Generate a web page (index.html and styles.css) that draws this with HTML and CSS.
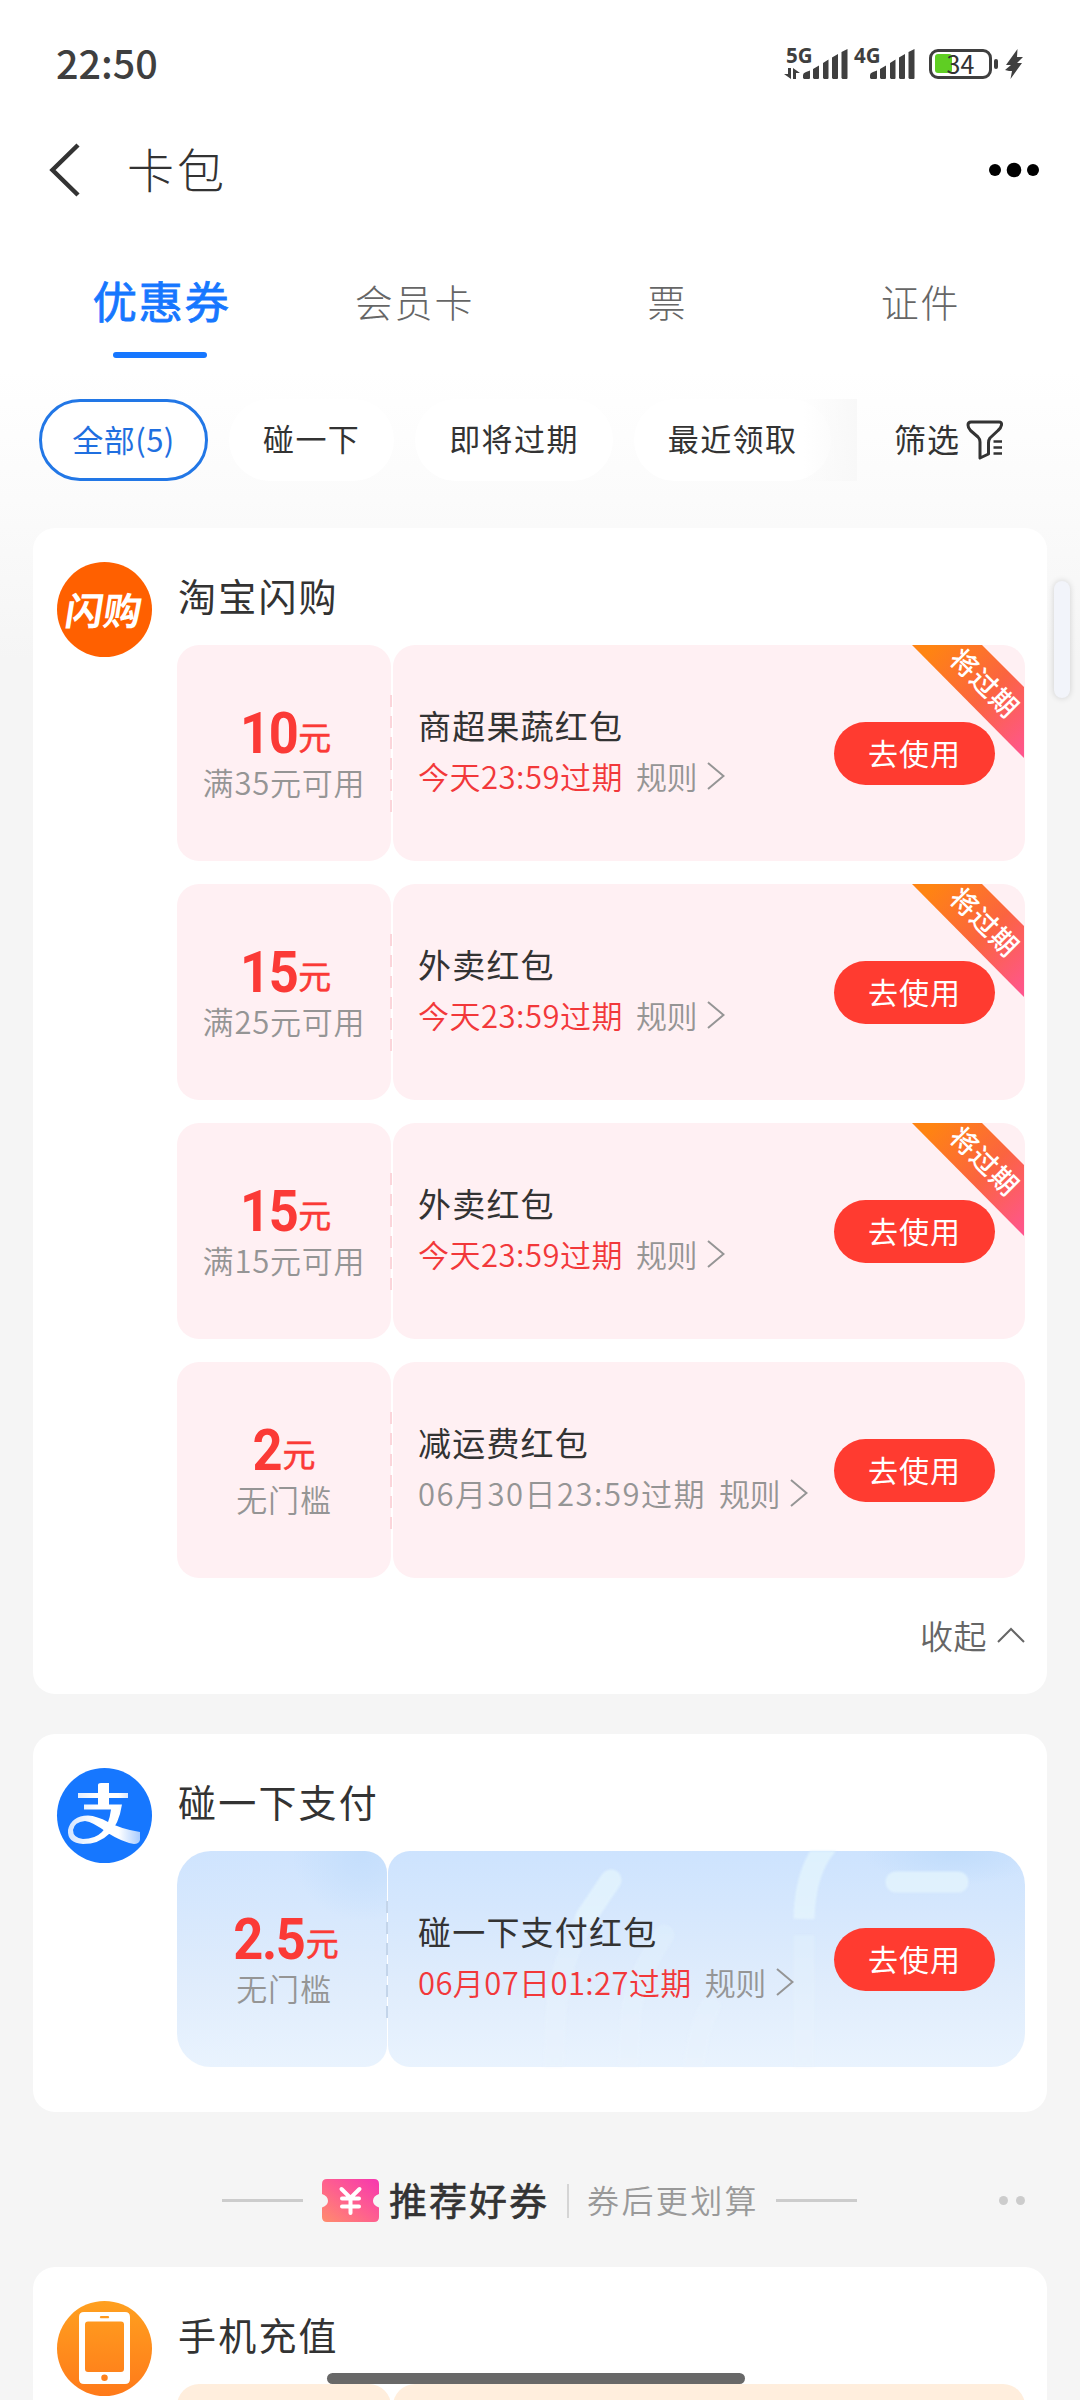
FILE: index.html
```html
<!DOCTYPE html>
<html lang="zh-CN">
<head>
<meta charset="utf-8">
<title>卡包</title>
<link rel="stylesheet" href="styles.css">
</head>
<body>
<svg class="defs" width="0" height="0" aria-hidden="true">
  <defs>
    <linearGradient id="ribbonFill" x1="0" y1="0" x2="1" y2="1">
      <stop offset="0.1" stop-color="#ff8412"/><stop offset="0.55" stop-color="#fb6440"/><stop offset="1" stop-color="#ff5591"/>
    </linearGradient>
    <linearGradient id="ticketFill" x1="0" y1="1" x2="1" y2="0">
      <stop offset="0" stop-color="#ff8d6c"/><stop offset="0.5" stop-color="#fe5f8f"/><stop offset="1" stop-color="#f636b0"/>
    </linearGradient>
    <linearGradient id="payFill" x1="0" y1="0" x2="1" y2="0">
      <stop offset="0" stop-color="#d3e4ff"/><stop offset="0.4" stop-color="#fff"/><stop offset="0.7" stop-color="#fff"/><stop offset="1" stop-color="#a9ccff"/>
    </linearGradient>
    <linearGradient id="decorFill" gradientUnits="userSpaceOnUse" x1="0" y1="0" x2="0" y2="216">
      <stop offset="0" stop-color="#def1fd"/><stop offset="1" stop-color="#ebf4fe"/>
    </linearGradient>
    <symbol id="arrow" viewBox="0 0 18 28"><path d="M1 1 L16.500 14 L1 27" fill="none" stroke="currentColor" stroke-width="2"/></symbol>
    <symbol id="bars" viewBox="0 0 45 30">
      <path d="M0 29V26Q0 24 3 23L7 21.500V29Q7 30 6 30H1ZM10 29V20L16 16.500V29Q16 30 15 30H11ZM20 29V14L25.500 10.500V29Q25.500 30 24.500 30H21ZM29 29V8.500L35 5V29Q35 30 34 30H30ZM38.500 29V3L44.500 0V29Q44.500 30 43.500 30H39.500Z" fill="#3f3f3f"/>
    </symbol>
  </defs>
</svg>

<div class="screen">
  <header class="status">
    <span class="clock">22:50</span>
    <div class="status-icons">
      <div class="net">
        <div class="net-type"><span class="gen">5G</span>
          <svg width="16" height="11" viewBox="0 0 16 11"><path d="M4 0H7V11L0 6H4ZM9 11V0L16 5H12V11Z" fill="#3f3f3f"/></svg>
        </div>
        <svg class="bars bars-a" width="45" height="30"><use href="#bars"/></svg>
      </div>
      <div class="net net-b">
        <div class="net-type"><span class="gen">4G</span></div>
        <svg class="bars bars-b" width="45" height="30"><use href="#bars"/></svg>
      </div>
      <div class="battery"><i class="charge"></i><span class="level">34</span></div>
      <i class="nub"></i>
      <svg class="bolt" width="18" height="30" viewBox="0 0 18 30"><path d="M12.500 0L1 16H6L0 21L4 22H7L5.500 30L17 14H12L18 8H12Z" fill="#3f3f3f"/></svg>
    </div>
  </header>

  <nav class="navbar">
    <svg class="back" width="32" height="54" viewBox="0 0 32 54"><path d="M30 2L4.500 27L30 52" fill="none" stroke="#333" stroke-width="4.500"/></svg>
    <h1 class="nav-title">卡包</h1>
    <svg class="more" width="52" height="16" viewBox="0 0 52 16"><circle cx="7" cy="8" r="6"/><circle cx="26" cy="8" r="7.300"/><circle cx="45" cy="8" r="6"/></svg>
  </nav>

  <div class="tabs">
    <div class="tab tab-on">优惠券</div>
    <div class="tab">会员卡</div>
    <div class="tab">票</div>
    <div class="tab">证件</div>
  </div>

  <div class="filters">
    <div class="chips">
      <div class="chip chip-on">全部(5)</div>
      <div class="chip">碰一下</div>
      <div class="chip">即将过期</div>
      <div class="chip">最近领取</div>
      <div class="chips-fade"></div>
    </div>
    <div class="sift"><span>筛选</span>
      <svg width="38" height="40" viewBox="0 0 38 40" fill="none" stroke="#333" stroke-width="3" stroke-linejoin="round"><path d="M5 2H33Q36 2 35.500 5Q35 8 32 10.500L24 18Q22.500 20 22.500 23V34L14 38V22Q14 19 12 17L4.500 10.500Q2 8 2 5Q2 2 5 2Z"/><path d="M27.500 21.500H36M27.500 27.500H36M27.500 33.500H36" stroke-width="2.600"/></svg>
    </div>
  </div>

  <main class="list">
    <section class="card card-shop">
      <div class="logo logo-shop"><span>闪购</span></div>
      <div class="card-body">
        <h2 class="brand">淘宝闪购</h2>
        <div class="coupons">
          <article class="coupon">
            <div class="worth"><p class="price"><b>10</b><span>元</span></p><p class="cond">满35元可用</p></div>
            <div class="info">
              <div class="text"><h3 class="name">商超果蔬红包</h3><p class="meta"><span class="due soon">今天23:59过期</span><span class="rule">规则</span><svg class="arrow" width="18" height="28"><use href="#arrow"/></svg></p></div>
              <button class="use">去使用</button>
            </div>
            <svg class="ribbon" width="112" height="113" viewBox="0 0 112 113"><path d="M0 0H70L112 42V113Z" fill="url(#ribbonFill)"/><text class="ribbon-text" transform="translate(72 39) rotate(45)" text-anchor="middle" y="9">将过期</text></svg>
          </article>
          <article class="coupon">
            <div class="worth"><p class="price"><b>15</b><span>元</span></p><p class="cond">满25元可用</p></div>
            <div class="info">
              <div class="text"><h3 class="name">外卖红包</h3><p class="meta"><span class="due soon">今天23:59过期</span><span class="rule">规则</span><svg class="arrow" width="18" height="28"><use href="#arrow"/></svg></p></div>
              <button class="use">去使用</button>
            </div>
            <svg class="ribbon" width="112" height="113" viewBox="0 0 112 113"><path d="M0 0H70L112 42V113Z" fill="url(#ribbonFill)"/><text class="ribbon-text" transform="translate(72 39) rotate(45)" text-anchor="middle" y="9">将过期</text></svg>
          </article>
          <article class="coupon">
            <div class="worth"><p class="price"><b>15</b><span>元</span></p><p class="cond">满15元可用</p></div>
            <div class="info">
              <div class="text"><h3 class="name">外卖红包</h3><p class="meta"><span class="due soon">今天23:59过期</span><span class="rule">规则</span><svg class="arrow" width="18" height="28"><use href="#arrow"/></svg></p></div>
              <button class="use">去使用</button>
            </div>
            <svg class="ribbon" width="112" height="113" viewBox="0 0 112 113"><path d="M0 0H70L112 42V113Z" fill="url(#ribbonFill)"/><text class="ribbon-text" transform="translate(72 39) rotate(45)" text-anchor="middle" y="9">将过期</text></svg>
          </article>
          <article class="coupon">
            <div class="worth"><p class="price"><b>2</b><span>元</span></p><p class="cond">无门槛</p></div>
            <div class="info">
              <div class="text"><h3 class="name">减运费红包</h3><p class="meta"><span class="due due-long">06月30日23:59过期</span><span class="rule">规则</span><svg class="arrow" width="18" height="28"><use href="#arrow"/></svg></p></div>
              <button class="use">去使用</button>
            </div>
          </article>
        </div>
        <div class="fold"><span>收起</span><svg width="28" height="16" viewBox="0 0 28 16"><path d="M1 15L14 2L27 15" fill="none" stroke="#666" stroke-width="2"/></svg></div>
      </div>
    </section>

    <section class="card card-pay">
      <div class="logo logo-pay">
        <svg width="95" height="95" viewBox="0 0 95 95"><path d="M41 17Q41 15 44 15H52V25H71V30H52V36.500H65Q62 56 52 66Q42 76 26 76Q10 75 11 62Q14 48 31 47.500Q40 48 51 54Q64 61 83 64V72Q82 76 77 76Q65 74 50 64.500Q36 54 28 53Q17 54 16 62Q16 70 26 71Q38 71 45 64Q52 57 54 41.500H27V36.500H41V30H21V25H41Z" fill="url(#payFill)"/></svg>
      </div>
      <div class="card-body">
        <h2 class="brand">碰一下支付</h2>
        <article class="coupon coupon-blue">
          <div class="worth"><p class="price"><b>2.5</b><span>元</span></p><p class="cond">无门槛</p></div>
          <div class="info">
            <svg class="decor" width="637" height="216" viewBox="0 0 637 216" fill="none" stroke="url(#decorFill)" stroke-width="21" stroke-linecap="round"><path d="M223 29L198 66"/><path d="M198 66Q172 110 168 160L165 240" opacity=".45"/><path d="M276 84Q248 126 243 160L239 240" opacity=".4"/><path d="M322 156Q308 180 303 240" opacity=".4"/><path d="M441 -8Q417 18 416 68" stroke-linecap="butt"/><path d="M416 84V240" opacity=".45" stroke-linecap="butt"/><path d="M508 31H570"/></svg>
            <div class="text"><h3 class="name">碰一下支付红包</h3><p class="meta"><span class="due soon due-mid">06月07日01:27过期</span><span class="rule">规则</span><svg class="arrow" width="18" height="28"><use href="#arrow"/></svg></p></div>
            <button class="use">去使用</button>
          </div>
        </article>
      </div>
    </section>

    <div class="picks">
      <i class="rule-line"></i>
      <svg class="ticket" width="57" height="43" viewBox="0 0 57 43"><path d="M5 0H52Q57 0 57 5V15Q51 17 51 22Q51 26 57 28.500V38Q57 43 52 43H5Q0 43 0 38V28.500Q6 26 6 22Q6 17 0 15V5Q0 0 5 0Z" fill="url(#ticketFill)"/><path d="M19.500 10L28.500 19L37.500 10M28.500 19V34M20 19.500H37M20 27.500H37" fill="none" stroke="#fff" stroke-width="4" stroke-linecap="round"/></svg>
      <h2 class="picks-title">推荐好券</h2>
      <i class="bar"></i>
      <span class="picks-sub">券后更划算</span>
      <i class="rule-line"></i>
      <div class="dots"><i></i><i></i></div>
    </div>

    <section class="card card-phone">
      <div class="logo logo-phone">
        <svg width="95" height="95" viewBox="0 0 95 95"><path fill-rule="evenodd" d="M27 11H68Q73 11 73 16V78Q73 83 68 83H27Q22 83 22 78V16Q22 11 27 11ZM31 20.500Q28 20.500 28 23.500V68Q28 71 31 71H64Q67 71 67 68V23.500Q67 20.500 64 20.500ZM43.500 15Q42 16.300 43.500 17.300H51.500Q53 16.300 51.500 15ZM47.500 73.500A3.200 3.200 0 1 0 47.500 80A3.200 3.200 0 1 0 47.500 73.500Z" fill="#fff"/></svg>
      </div>
      <div class="card-body">
        <h2 class="brand">手机充值</h2>
        <div class="coupon coupon-peach"><div class="worth"></div><div class="info"></div></div>
      </div>
    </section>
  </main>

  <i class="side-handle"></i>
  <i class="home-bar"></i>
</div>
</body>
</html>
```
FILE: styles.css
```css
* { box-sizing: border-box; margin: 0; padding: 0; }
body {
  background: #f5f5f5;
  color: #333;
  font-family: "Noto Sans CJK SC", "Noto Sans", sans-serif;
}
i { display: block; }
svg { flex: none; }
.defs { position: absolute; }
.screen {
  position: relative;
  width: 1080px;
  height: 2400px;
  overflow: hidden;
  background: linear-gradient(#fff 370px, #fbfbfb 500px, #f5f5f5 660px);
}

/* status bar */
.status { display: flex; justify-content: space-between; height: 128px; padding: 47px 57px 0 56px; }
.clock { font-size: 39.5px; line-height: 30px; height: 36px; font-weight: 500; color: #3f3f3f; }
.status-icons { display: flex; align-items: flex-start; height: 34px; }
.net { display: flex; height: 32px; align-items: flex-end; }
.net-type { display: flex; flex-direction: column; justify-content: space-between; height: 32px; width: 19px; }
.gen { font: 700 20.5px/16px "Open Sans", sans-serif; color: #3f3f3f; width: 30px; padding-left: 2px; white-space: nowrap; }
.net-b { margin-left: 4px; }
.net-b .net-type { width: 18px; }
.battery {
  display: flex; align-items: center; justify-content: center; position: relative;
  width: 63px; height: 30px; margin: 2px 2px 0 14px;
  border: 3.5px solid #3f3f3f; border-radius: 9px;
}
.charge { position: absolute; left: 3px; top: 2px; width: 17px; height: 19px; border-radius: 3px; background: #5fce23; }
.level { position: relative; font-size: 25px; line-height: 22px; height: 24px; }
.nub { width: 4px; height: 10px; margin-top: 12px; border-radius: 2px; background: #3f3f3f; }
.bolt { margin: 2px 0 0 7px; }

/* title bar */
.navbar { display: flex; align-items: center; height: 84px; padding: 0 40px 0 48px; }
.nav-title { margin: -5px 0 0 47px; font-size: 47px; font-weight: 300; line-height: 60px; letter-spacing: 3px; flex: 1; }

/* tabs */
.tabs { display: grid; grid-template-columns: repeat(4, 253px); margin: 0 32px 0 35px; height: 168px; padding-top: 54px; }
.tab { height: 94px; text-align: center; font-size: 38px; font-weight: 300; line-height: 70px; letter-spacing: 1.8px; color: #666; }
.tab-on { font-size: 44.5px; font-weight: 400; line-height: 67px; letter-spacing: 1.5px; color: #1677ff; -webkit-text-stroke: 0.8px #1677ff; }
.tab-on::after { content: ""; display: block; width: 94px; height: 6px; margin: 19px 0 0 78px; border-radius: 3px; background: #1677ff; }

/* filters */
.filters { display: flex; height: 148px; padding: 19px 0 0 39px; }
.chips { display: flex; gap: 21px; position: relative; width: 818px; height: 82px; overflow: hidden; }
.chip {
  flex: none; height: 82px; padding: 0 34px; border-radius: 41px; background: #fff;
  font-size: 31px; line-height: 78px; letter-spacing: 1.4px; white-space: nowrap;
}
.chip-on { width: 169px; padding: 0; text-align: center; border: 3px solid #2277e6; line-height: 73px; letter-spacing: 0.5px; color: #1f6fe0; }
.chips-fade { position: absolute; right: 0; top: 0; width: 54px; height: 82px; background: linear-gradient(90deg, rgba(247,247,247,0), #f8f8f8); }
.sift { display: flex; align-items: center; gap: 6px; height: 82px; margin-left: 37px; font-size: 32px; letter-spacing: 1px; }
.sift span { line-height: 40px; height: 44px; }

/* cards */
.list { padding: 0 33px; }
.card { display: flex; align-items: flex-start; gap: 25px; padding: 34px 22px 0 24px; border-radius: 22px; background: #fff; }
.card-shop { height: 1166px; }
.card-pay { height: 378px; margin-top: 40px; }
.card-phone { height: 380px; }
.logo { display: flex; align-items: center; justify-content: center; flex: none; width: 95px; height: 95px; border-radius: 50%; }
.logo-shop { background: #ff6000; }
.logo-shop span { color: #fff; font-size: 38px; font-weight: 700; line-height: 48px; transform: skewX(-9deg) translateY(-1px); }
.logo-pay { background: #1677ff; }
.logo-phone { background: linear-gradient(#ffa01f, #ff7a1a); }
.card-body { flex: 1; padding-top: 7px; }
.brand { height: 76px; padding-left: 1px; font-size: 38px; font-weight: 400; line-height: 52px; letter-spacing: 2.2px; }

/* coupons */
.coupons { display: flex; flex-direction: column; gap: 23px; }
.coupon { display: flex; gap: 2px; position: relative; width: 848px; height: 216px; --tint: #fff0f3; }
.worth {
  display: flex; flex-direction: column; align-items: center;
  width: 214px; padding: 55px 0 0 0; border-radius: 22px; background: var(--tint);
}
.price { display: flex; align-items: baseline; gap: 1px; height: 62px; padding-right: 2px; color: #fb3a36; white-space: nowrap; }
.price b { font: 700 57px/62px Roboto, sans-serif; letter-spacing: -1.5px; transform: translateY(3px) scaleX(0.92); transform-origin: 100% 50%; }
.price span { font-size: 33px; font-weight: 400; line-height: 62px; -webkit-text-stroke: 0.5px #fb3a36; }
.cond { font-size: 31px; line-height: 39px; letter-spacing: 0.8px; font-weight: 350; color: #959595; }
.info {
  display: flex; align-items: flex-start; justify-content: space-between; position: relative; flex: 1;
  padding: 0 30px 0 25px; border-radius: 22px; background: var(--tint);
}
.info::before {
  content: ""; position: absolute; left: -3px; top: 50px; width: 2px; height: 117px;
  background: repeating-linear-gradient(#fbd5da 0 12px, transparent 12px 21px);
}
.text { position: relative; padding-top: 56px; }
.name { height: 53px; font-size: 33px; font-weight: 400; line-height: 48px; letter-spacing: 1.2px; white-space: nowrap; }
.meta { display: flex; align-items: center; height: 44px; font-size: 31px; line-height: 44px; font-weight: 350; color: #959595; white-space: nowrap; }
.due { letter-spacing: 0.5px; }
.due-long { letter-spacing: 1.5px; }
.due-mid { letter-spacing: 0.4px; }
.soon { color: #f2383a; font-weight: 350; }
.rule { margin: 0 10px 0 13px; letter-spacing: -0.5px; }
.use {
  position: relative; width: 161px; height: 63px; margin-top: 77px; border: 0; border-radius: 32px; background: #ff3b30;
  color: #fff; font: 400 30px/58px "Noto Sans CJK SC", sans-serif; letter-spacing: 1px; padding-bottom: 4px;
}
.ribbon { position: absolute; right: 1px; top: 0; overflow: visible; }
.ribbon-text { font-size: 27px; font-weight: 500; letter-spacing: 1.2px; fill: #fff; }

.fold { display: flex; align-items: center; justify-content: flex-end; gap: 10px; height: 50px; margin-top: 32px; font-size: 33px; letter-spacing: 0.5px; font-weight: 350; color: #666; }

.coupon-blue { gap: 1px; }
.coupon-blue .worth {
  width: 210px; padding-left: 4px; border-radius: 34px 22px 22px 34px;
  background: radial-gradient(circle at 185px 0, #c4defc, rgba(207,228,254,0) 70px), linear-gradient(#cfe4fe, #dfecfc 60%, #e9f3fe);
}
.coupon-blue .info {
  padding-left: 30px; border-radius: 22px 34px 34px 22px;
  background: radial-gradient(ellipse at 565px 0, #c0dcfb, rgba(207,228,254,0) 90px), linear-gradient(#cde3fe, #dfecfc 60%, #e9f3fe);
}
.coupon-blue .info::before { left: -2px; background: repeating-linear-gradient(#c4d5ea 0 12px, transparent 12px 21px); }
.decor { position: absolute; left: 0; top: 0; overflow: hidden; filter: blur(1px); border-radius: 22px 34px 34px 22px; }
.coupon-peach { --tint: #ffeedd; }

/* section divider */
.picks { display: flex; align-items: center; position: relative; height: 155px; padding: 22px 0 0 189px; }
.rule-line { width: 81px; height: 3px; background: #ccc; }
.ticket { margin: 0 10px 0 19px; }
.picks-title { font-size: 38px; font-weight: 400; letter-spacing: 2px; line-height: 50px; padding-bottom: 4px; -webkit-text-stroke: 0.6px #333; }
.bar { width: 2px; height: 34px; margin: 0 18px 0 18px; background: #d5d5d5; }
.picks-sub { font-size: 32px; line-height: 46px; letter-spacing: 2.4px; color: #999; padding-bottom: 3px; margin-right: 17px; font-weight: 350; }
.dots { display: flex; gap: 8px; margin-left: auto; padding-right: 22px; }
.dots i { width: 9px; height: 9px; border-radius: 50%; background: #ccc; }

/* overlays */
.side-handle { position: absolute; left: 1054px; top: 581px; width: 16px; height: 117px; border-radius: 8px; background: #f2f4fa; box-shadow: 0 0 6px rgba(0,0,0,.16); }
.home-bar { position: absolute; left: 327px; top: 2373px; width: 418px; height: 11px; border-radius: 6px; background: #686868; }
```
